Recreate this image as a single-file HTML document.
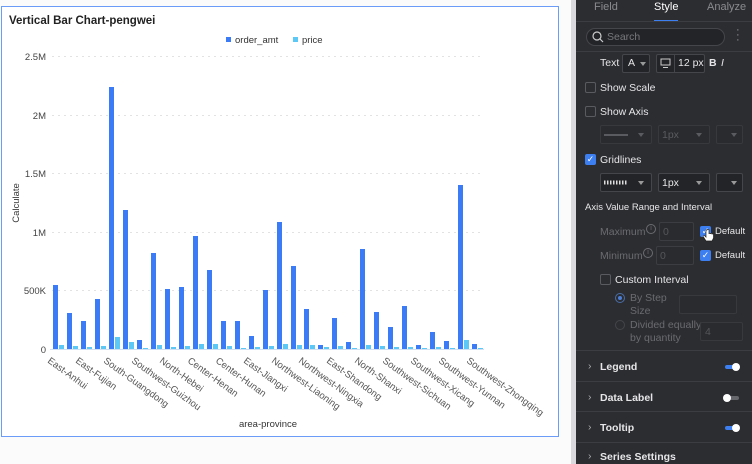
<!DOCTYPE html>
<html><head><meta charset="utf-8"><style>
*{margin:0;padding:0;box-sizing:border-box}
body{width:752px;height:464px;overflow:hidden;background:#fbfbfc;font-family:"Liberation Sans",sans-serif;position:relative}
.chart{position:absolute;left:1px;top:6px;width:558px;height:431px;border:1px solid #6a9cf8;background:#fff}
.strip{position:absolute;left:571px;top:0;width:5px;height:464px;background:#d9d9de}
.panel{position:absolute;left:576px;top:0;width:176px;height:464px;background:#2c2d31;color:#e6e6e8;font-size:10.5px}
.a{position:absolute;white-space:nowrap}
.cb{position:absolute;width:11px;height:11px;border:1px solid #5a5b60;border-radius:2px}
.cbc{position:absolute;width:11px;height:11px;background:#3d7ff0;border-radius:2px;color:#fff;font-size:9px;line-height:11px;text-align:center}
.sel{position:absolute;height:19px;border:1px solid #45464b;border-radius:2px;background:#232428}
.tri{position:absolute;width:0;height:0;border-left:3px solid transparent;border-right:3px solid transparent;border-top:4px solid #999}
.dim{color:#77787c}
.hr{position:absolute;left:0;width:176px;height:1px;background:#3c3d42}
.tog{position:absolute;width:14px;height:4px;border-radius:2px}
.knob{position:absolute;width:8px;height:8px;border-radius:4px;background:#fff}
</style></head><body>
<div class="chart"></div>
<div class="strip"></div>
<svg class="a" style="left:0;top:0" width="560" height="464" font-family="Liberation Sans, sans-serif">
<text x="9" y="24" font-size="11.5" font-weight="bold" fill="#222">Vertical Bar Chart-pengwei</text>
<rect x="226" y="37" width="5" height="5" fill="#3b7cf6"/><text x="235" y="43" font-size="9.5" fill="#333">order_amt</text>
<rect x="293" y="37" width="5" height="5" fill="#5bc8f5"/><text x="302" y="43" font-size="9.5" fill="#333">price</text>
<g stroke="#e2e2e2" stroke-dasharray="2,4" stroke-width="1">
<line x1="52" y1="56.5" x2="480" y2="56.5"/><line x1="52" y1="115.5" x2="480" y2="115.5"/><line x1="52" y1="173.5" x2="480" y2="173.5"/><line x1="52" y1="232.5" x2="480" y2="232.5"/><line x1="52" y1="290.5" x2="480" y2="290.5"/></g>
<line x1="50" y1="349.5" x2="484" y2="349.5" stroke="#cfe0f5"/>
<g font-size="9.5" fill="#444" text-anchor="end">
<text x="46" y="60">2.5M</text><text x="46" y="119">2M</text><text x="46" y="177">1.5M</text><text x="46" y="236">1M</text><text x="46" y="294">500K</text><text x="46" y="353">0</text></g>
<text transform="translate(19,203) rotate(-90)" font-size="9.5" fill="#333" text-anchor="middle">Calculate</text>
<text x="268" y="427" font-size="9.5" fill="#333" text-anchor="middle">area-province</text>
<g fill="#3b7cf6">
<rect x="53" y="285" width="5" height="64"/><rect x="67" y="313" width="5" height="36"/><rect x="81" y="321" width="5" height="28"/><rect x="95" y="299" width="5" height="50"/><rect x="109" y="87" width="5" height="262"/><rect x="123" y="210" width="5" height="139"/><rect x="137" y="340" width="5" height="9"/><rect x="151" y="253" width="5" height="96"/><rect x="165" y="289" width="5" height="60"/><rect x="179" y="287" width="5" height="62"/><rect x="193" y="236" width="5" height="113"/><rect x="207" y="270" width="5" height="79"/><rect x="221" y="321" width="5" height="28"/><rect x="235" y="321" width="5" height="28"/><rect x="249" y="336" width="5" height="13"/><rect x="263" y="290" width="5" height="59"/><rect x="277" y="222" width="5" height="127"/><rect x="291" y="266" width="5" height="83"/><rect x="304" y="309" width="5" height="40"/><rect x="318" y="345" width="5" height="4"/><rect x="332" y="318" width="5" height="31"/><rect x="346" y="342" width="5" height="7"/><rect x="360" y="249" width="5" height="100"/><rect x="374" y="312" width="5" height="37"/><rect x="388" y="327" width="5" height="22"/><rect x="402" y="306" width="5" height="43"/><rect x="416" y="345" width="5" height="4"/><rect x="430" y="332" width="5" height="17"/><rect x="444" y="341" width="5" height="8"/><rect x="458" y="185" width="5" height="164"/><rect x="472" y="344" width="5" height="5"/></g>
<g fill="#5bc8f5">
<rect x="59" y="345" width="5" height="4"/><rect x="73" y="346" width="5" height="3"/><rect x="87" y="347" width="5" height="2"/><rect x="101" y="346" width="5" height="3"/><rect x="115" y="337" width="5" height="12"/><rect x="129" y="342" width="5" height="7"/><rect x="143" y="348" width="5" height="1"/><rect x="157" y="345" width="5" height="4"/><rect x="171" y="347" width="5" height="2"/><rect x="185" y="346" width="5" height="3"/><rect x="199" y="344" width="5" height="5"/><rect x="213" y="344" width="5" height="5"/><rect x="227" y="346" width="5" height="3"/><rect x="241" y="348" width="5" height="1"/><rect x="255" y="347" width="5" height="2"/><rect x="269" y="346" width="5" height="3"/><rect x="283" y="344" width="5" height="5"/><rect x="297" y="345" width="5" height="4"/><rect x="310" y="345" width="5" height="4"/><rect x="324" y="347" width="5" height="2"/><rect x="338" y="346" width="5" height="3"/><rect x="352" y="348" width="5" height="1"/><rect x="366" y="345" width="5" height="4"/><rect x="380" y="346" width="5" height="3"/><rect x="394" y="347" width="5" height="2"/><rect x="408" y="347" width="5" height="2"/><rect x="422" y="348" width="5" height="1"/><rect x="436" y="347" width="5" height="2"/><rect x="450" y="348" width="5" height="1"/><rect x="464" y="340" width="5" height="9"/><rect x="478" y="348" width="5" height="1"/></g>
<g font-size="9.5" fill="#555">
<text transform="translate(47,362) rotate(36)">East-Anhui</text>
<text transform="translate(75,362) rotate(36)">East-Fujian</text>
<text transform="translate(103,362) rotate(36)">South-Guangdong</text>
<text transform="translate(131,362) rotate(36)">Southwest-Guizhou</text>
<text transform="translate(159,362) rotate(36)">North-Hebei</text>
<text transform="translate(187,362) rotate(36)">Center-Henan</text>
<text transform="translate(215,362) rotate(36)">Center-Hunan</text>
<text transform="translate(243,362) rotate(36)">East-Jiangxi</text>
<text transform="translate(271,362) rotate(36)">Northwest-Liaoning</text>
<text transform="translate(298,362) rotate(36)">Northwest-Ningxia</text>
<text transform="translate(326,362) rotate(36)">East-Shandong</text>
<text transform="translate(354,362) rotate(36)">North-Shanxi</text>
<text transform="translate(382,362) rotate(36)">Southwest-Sichuan</text>
<text transform="translate(410,362) rotate(36)">Southwest-Xicang</text>
<text transform="translate(438,362) rotate(36)">Southwest-Yunnan</text>
<text transform="translate(466,362) rotate(36)">Southwest-Zhongqing</text>
</g></svg>

<div class="panel">
<div class="a" style="left:18px;top:1px;font-size:11px;color:#8a8b8f">Field</div>
<div class="a" style="left:78px;top:1px;font-size:11px;color:#fff">Style</div>
<div class="a" style="left:131px;top:1px;font-size:11px;color:#8a8b8f">Analyze</div>
<div class="a" style="left:78px;top:20px;width:24px;height:2px;background:#3d7ff0"></div>
<div class="hr" style="top:21px"></div>
<div class="a" style="left:10px;top:28px;width:139px;height:18px;border:1px solid #45464b;border-radius:9px;background:#232428"></div>
<svg class="a" style="left:16px;top:31px" width="12" height="12"><circle cx="5" cy="5" r="4" stroke="#ccc" fill="none" stroke-width="1.2"/><line x1="8" y1="8" x2="11" y2="11" stroke="#ccc" stroke-width="1.2"/></svg>
<div class="a" style="left:31px;top:31px;font-size:10.5px;color:#77787c">Search</div>
<div class="a" style="left:160px;top:28px;color:#999;font-size:11px;line-height:5px">·<br>·<br>·</div>
<div class="hr" style="top:51px"></div>
<div class="a" style="left:24px;top:57px">Text</div>
<div class="sel" style="left:46px;top:54px;width:28px"></div><div class="a" style="left:52px;top:57px">A</div><div class="tri" style="left:64px;top:62px"></div>
<div class="sel" style="left:80px;top:54px;width:49px"></div><div class="a" style="left:98px;top:54px;width:1px;height:19px;background:#45464b"></div>
<svg class="a" style="left:84px;top:58px" width="11" height="11"><rect x="1" y="1" width="9" height="6" fill="none" stroke="#ccc"/><line x1="3" y1="9.5" x2="8" y2="9.5" stroke="#ccc"/></svg>
<div class="a" style="left:102px;top:57px">12 px</div>
<div class="a" style="left:133px;top:57px;font-weight:bold">B</div><div class="a" style="left:145px;top:57px;font-style:italic">I</div>
<div class="cb" style="left:9px;top:82px"></div><div class="a" style="left:24px;top:82px">Show Scale</div>
<div class="cb" style="left:9px;top:106px"></div><div class="a" style="left:24px;top:106px">Show Axis</div>
<div class="sel" style="left:24px;top:125px;width:52px;border-color:#38393d;background:#2a2b2f"></div><div class="a" style="left:28px;top:134px;width:24px;height:2px;background:#5a5b60"></div><div class="tri" style="left:62px;top:133px;border-top-color:#5a5b60"></div>
<div class="sel" style="left:82px;top:125px;width:52px;border-color:#38393d;background:#2a2b2f"></div><div class="a" style="left:86px;top:129px;color:#5a5b60">1px</div><div class="tri" style="left:120px;top:133px;border-top-color:#5a5b60"></div>
<div class="sel" style="left:140px;top:125px;width:27px;border-color:#38393d;background:#2a2b2f"></div><div class="tri" style="left:155px;top:133px;border-top-color:#5a5b60"></div>
<div class="cbc" style="left:9px;top:154px">✓</div><div class="a" style="left:24px;top:154px">Gridlines</div>
<div class="sel" style="left:24px;top:173px;width:52px"></div>
<svg class="a" style="left:28px;top:180px" width="24" height="5"><line x1="0" y1="2.5" x2="24" y2="2.5" stroke="#ddd" stroke-width="4" stroke-dasharray="1.5,1.5"/></svg>
<div class="tri" style="left:62px;top:181px"></div>
<div class="sel" style="left:82px;top:173px;width:52px"></div><div class="a" style="left:86px;top:177px">1px</div><div class="tri" style="left:120px;top:181px"></div>
<div class="sel" style="left:140px;top:173px;width:27px"></div><div class="tri" style="left:155px;top:181px"></div>
<div class="a" style="left:9px;top:202px;font-size:9.5px">Axis Value Range and Interval</div>
<div class="a" style="left:24px;top:226px;color:#6a6b70">Maximum</div><div class="a" style="left:70px;top:224px;width:10px;height:10px;border:1px solid #6a6b70;border-radius:5px;font-size:7px;text-align:center;line-height:8px;color:#6a6b70">i</div>
<div class="sel" style="left:83px;top:222px;width:35px;border-color:#3c3d42;background:#2a2b2f"></div><div class="a" style="left:87px;top:226px;color:#55565a">0</div>
<div class="cbc" style="left:124px;top:226px">✓</div><div class="a" style="left:139px;top:226px;font-size:9.5px">Default</div>
<svg class="a" style="left:127px;top:229px" width="12" height="14"><path d="M3 1v7l-1.5-1.5c-1-.8-2 .2-1.3 1.1L3 12h6l1.5-3V5.5c0-1-1.5-1-1.5 0V5c0-1-1.5-1-1.5 0c0-1-1.5-1-1.5 0V1c0-1-2-1-2 0z" fill="#fff" stroke="#222" stroke-width=".7"/></svg>
<div class="a" style="left:24px;top:250px;color:#6a6b70">Minimum</div><div class="a" style="left:67px;top:248px;width:10px;height:10px;border:1px solid #6a6b70;border-radius:5px;font-size:7px;text-align:center;line-height:8px;color:#6a6b70">i</div>
<div class="sel" style="left:80px;top:246px;width:38px;border-color:#3c3d42;background:#2a2b2f"></div><div class="a" style="left:84px;top:250px;color:#55565a">0</div>
<div class="cbc" style="left:124px;top:250px">✓</div><div class="a" style="left:139px;top:250px;font-size:9.5px">Default</div>
<div class="cb" style="left:24px;top:274px"></div><div class="a" style="left:39px;top:274px">Custom Interval</div>
<div class="a" style="left:39px;top:293px;width:10px;height:10px;border-radius:5px;border:1px solid #4a6ea8;background:#2c2d31"></div><div class="a" style="left:42px;top:296px;width:4px;height:4px;border-radius:2px;background:#4a7ed8"></div>
<div class="a" style="left:54px;top:292px;color:#6a6b70;line-height:13px">By Step<br>Size</div>
<div class="sel" style="left:103px;top:295px;width:58px;border-color:#38393d;background:#2a2b2f"></div>
<div class="a" style="left:39px;top:320px;width:10px;height:10px;border-radius:5px;border:1px solid #44454a"></div>
<div class="a" style="left:54px;top:319px;color:#6a6b70;line-height:13px">Divided equally<br>by quantity</div>
<div class="sel" style="left:124px;top:322px;width:43px;border-color:#38393d;background:#2a2b2f"></div><div class="a" style="left:129px;top:326px;color:#55565a">4</div>
<div class="hr" style="top:350px"></div>
<div class="a" style="left:12px;top:360px;color:#aaa">›</div><div class="a" style="left:24px;top:361px;font-weight:bold">Legend</div>
<div class="tog" style="left:149px;top:365px;background:#3d7ff0"></div><div class="knob" style="left:156px;top:363px"></div>
<div class="hr" style="top:381px"></div>
<div class="a" style="left:12px;top:391px;color:#aaa">›</div><div class="a" style="left:24px;top:392px;font-weight:bold">Data Label</div>
<div class="tog" style="left:149px;top:396px;background:#66676c"></div><div class="knob" style="left:147px;top:394px"></div>
<div class="hr" style="top:411px"></div>
<div class="a" style="left:12px;top:421px;color:#aaa">›</div><div class="a" style="left:24px;top:422px;font-weight:bold">Tooltip</div>
<div class="tog" style="left:149px;top:426px;background:#3d7ff0"></div><div class="knob" style="left:156px;top:424px"></div>
<div class="hr" style="top:442px"></div>
<div class="a" style="left:12px;top:450px;color:#aaa">›</div><div class="a" style="left:24px;top:451px;font-weight:bold">Series Settings</div>
</div>
</body></html>
